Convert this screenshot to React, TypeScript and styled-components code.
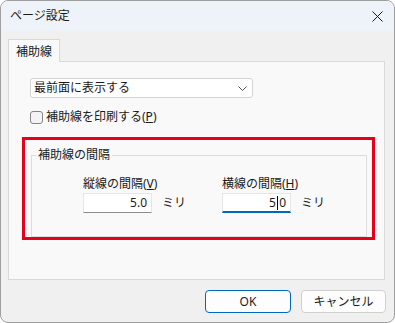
import styled, { createGlobalStyle } from 'styled-components';

const GlobalStyle = createGlobalStyle`
  html, body {
    margin: 0;
    padding: 0;
    background: #ffffff;
  }
  * {
    box-sizing: border-box;
  }
  body {
    font-family: "Noto Sans", "Noto Sans CJK JP", sans-serif;
    font-size: 12px;
    color: #1a1a1a;
  }
`;

const App = () => {
  return (
    <>
      <GlobalStyle />
      <StyledWindow>
        <StyledTitleBar>
          <StyledTitle>ページ設定</StyledTitle>
          <StyledCloseBtn aria-label="閉じる">
            <svg width="11" height="11" viewBox="0 0 11 11">
              <path d="M0.5 0.5 L10.5 10.5 M10.5 0.5 L0.5 10.5" stroke="#1a1a1a" strokeWidth="1" />
            </svg>
          </StyledCloseBtn>
        </StyledTitleBar>

        <StyledBody>
          <StyledTabs>
            <StyledTab $active>補助線</StyledTab>
          </StyledTabs>

          <StyledPanel>
            <StyledSelect>
              <span>最前面に表示する</span>
              <svg width="9" height="5" viewBox="0 0 9 5">
                <path d="M0.5 0.5 L4.5 4.5 L8.5 0.5" stroke="#555" strokeWidth="1" fill="none" />
              </svg>
            </StyledSelect>

            <StyledCheckRow>
              <StyledCheckBox />
              <span>
                補助線を印刷する(<u>P</u>)
              </span>
            </StyledCheckRow>

            <StyledGroupBox>
              <StyledLegend>補助線の間隔</StyledLegend>
              <StyledFieldRow>
                <StyledField>
                  <StyledFieldLabel>
                    縦線の間隔(<u>V</u>)
                  </StyledFieldLabel>
                  <StyledInputRow>
                    <StyledInput>5.0</StyledInput>
                    <StyledUnit>ミリ</StyledUnit>
                  </StyledInputRow>
                </StyledField>
                <StyledField>
                  <StyledFieldLabel>
                    横線の間隔(<u>H</u>)
                  </StyledFieldLabel>
                  <StyledInputRow>
                    <StyledInput $focused>
                      5<StyledCaret>.</StyledCaret>0
                    </StyledInput>
                    <StyledUnit>ミリ</StyledUnit>
                  </StyledInputRow>
                </StyledField>
              </StyledFieldRow>
            </StyledGroupBox>

            <StyledHighlight />
          </StyledPanel>

          <StyledButtonRow>
            <StyledButton $primary>OK</StyledButton>
            <StyledButton>キャンセル</StyledButton>
          </StyledButtonRow>
        </StyledBody>
      </StyledWindow>
    </>
  );
};

export default App;

const StyledWindow = styled.div`
  width: 395px;
  height: 323px;
  border: 1px solid #9e9e9e;
  border-radius: 8px;
  overflow: hidden;
  display: flex;
  flex-direction: column;
  background: #f0f0f0;
`;

const StyledTitleBar = styled.div`
  height: 30px;
  display: flex;
  align-items: center;
  justify-content: space-between;
  padding: 0 9px 0 9px;
  background: #eef2f9;
`;

const StyledTitle = styled.div`
  font-size: 12px;
  line-height: 16px;
  color: #1a1a1a;
`;

const StyledCloseBtn = styled.button`
  display: flex;
  align-items: center;
  justify-content: center;
  width: 16px;
  height: 16px;
  padding: 0;
  border: none;
  background: transparent;
`;

const StyledBody = styled.div`
  flex: 1;
  display: flex;
  flex-direction: column;
  padding: 8px 8px 0 7px;
`;

const StyledTabs = styled.div`
  display: flex;
  height: 22px;
  position: relative;
  z-index: 1;
`;

const StyledTab = styled.div<{ $active?: boolean }>`
  width: 52px;
  height: 23px;
  display: flex;
  align-items: center;
  justify-content: center;
  padding-bottom: 1px;
  border: 1px solid #d9d9d9;
  border-bottom: none;
  background: ${({ $active }) => ($active ? '#f9f9f9' : '#f0f0f0')};
  font-size: 12px;
  color: #1a1a1a;
`;

const StyledPanel = styled.div`
  position: relative;
  width: 377px;
  height: 219px;
  border: 1px solid #d9d9d9;
  background: #f9f9f9;
  padding: 16px 0 0 21px;
  display: flex;
  flex-direction: column;
  align-items: flex-start;
`;

const StyledSelect = styled.div`
  width: 223px;
  height: 20px;
  display: flex;
  align-items: center;
  justify-content: space-between;
  padding: 0 5px 0 3px;
  border: 1px solid #d4d4d4;
  border-radius: 3px;
  background: #ffffff;
  font-size: 12px;
  line-height: 16px;
`;

const StyledCheckRow = styled.label`
  display: flex;
  align-items: center;
  gap: 3px;
  margin-top: 11px;
  font-size: 12px;
  line-height: 16px;
`;

const StyledCheckBox = styled.span`
  width: 13px;
  height: 13px;
  border: 1px solid #858585;
  border-radius: 3px;
  background: #f3f3f3;
`;

const StyledGroupBox = styled.div`
  position: relative;
  width: 336px;
  height: 82px;
  margin: 30px 0 0 1px;
  border: 1px solid #dcdcdc;
  padding: 20px 0 0 51px;
`;

const StyledLegend = styled.span`
  position: absolute;
  top: -9px;
  left: 4px;
  padding: 0 2px;
  background: #f9f9f9;
  font-size: 12px;
  line-height: 16px;
`;

const StyledFieldRow = styled.div`
  display: flex;
`;

const StyledField = styled.div`
  width: 139px;
  display: flex;
  flex-direction: column;
  gap: 1px;
`;

const StyledFieldLabel = styled.div`
  font-size: 12px;
  line-height: 16px;
`;

const StyledInputRow = styled.div`
  display: flex;
  align-items: center;
  gap: 10px;
`;

const StyledInput = styled.div<{ $focused?: boolean }>`
  width: 69px;
  height: 20px;
  display: flex;
  align-items: center;
  justify-content: flex-end;
  padding-right: 4px;
  background: #ffffff;
  border: 1px solid #e6e6e6;
  border-bottom: ${({ $focused }) => ($focused ? '2px solid #0067c0' : '1px solid #8c8c8c')};
  font-family: "Noto Sans", sans-serif;
  font-size: 12px;
  line-height: 16px;
`;

const StyledCaret = styled.span`
  position: relative;
  color: transparent;
  &::after {
    content: '';
    position: absolute;
    left: 1px;
    top: 1px;
    width: 1px;
    height: 14px;
    background: #000000;
  }
`;

const StyledUnit = styled.span`
  font-size: 12px;
  line-height: 16px;
`;

const StyledHighlight = styled.div`
  position: absolute;
  left: 13px;
  top: 75px;
  width: 353px;
  height: 103px;
  border: 3px solid #e6001a;
  pointer-events: none;
`;

const StyledButtonRow = styled.div`
  display: flex;
  justify-content: flex-end;
  gap: 10px;
  margin-top: 10px;
`;

const StyledButton = styled.button<{ $primary?: boolean }>`
  width: ${({ $primary }) => ($primary ? '86px' : '85px')};
  height: 23px;
  padding: 0;
  border: 1px solid ${({ $primary }) => ($primary ? '#0067c0' : '#d0d0d0')};
  border-radius: 4px;
  background: #fdfdfd;
  font-family: "Noto Sans", "Noto Sans CJK JP", sans-serif;
  font-size: 12px;
  line-height: 16px;
  color: #1a1a1a;
`;
